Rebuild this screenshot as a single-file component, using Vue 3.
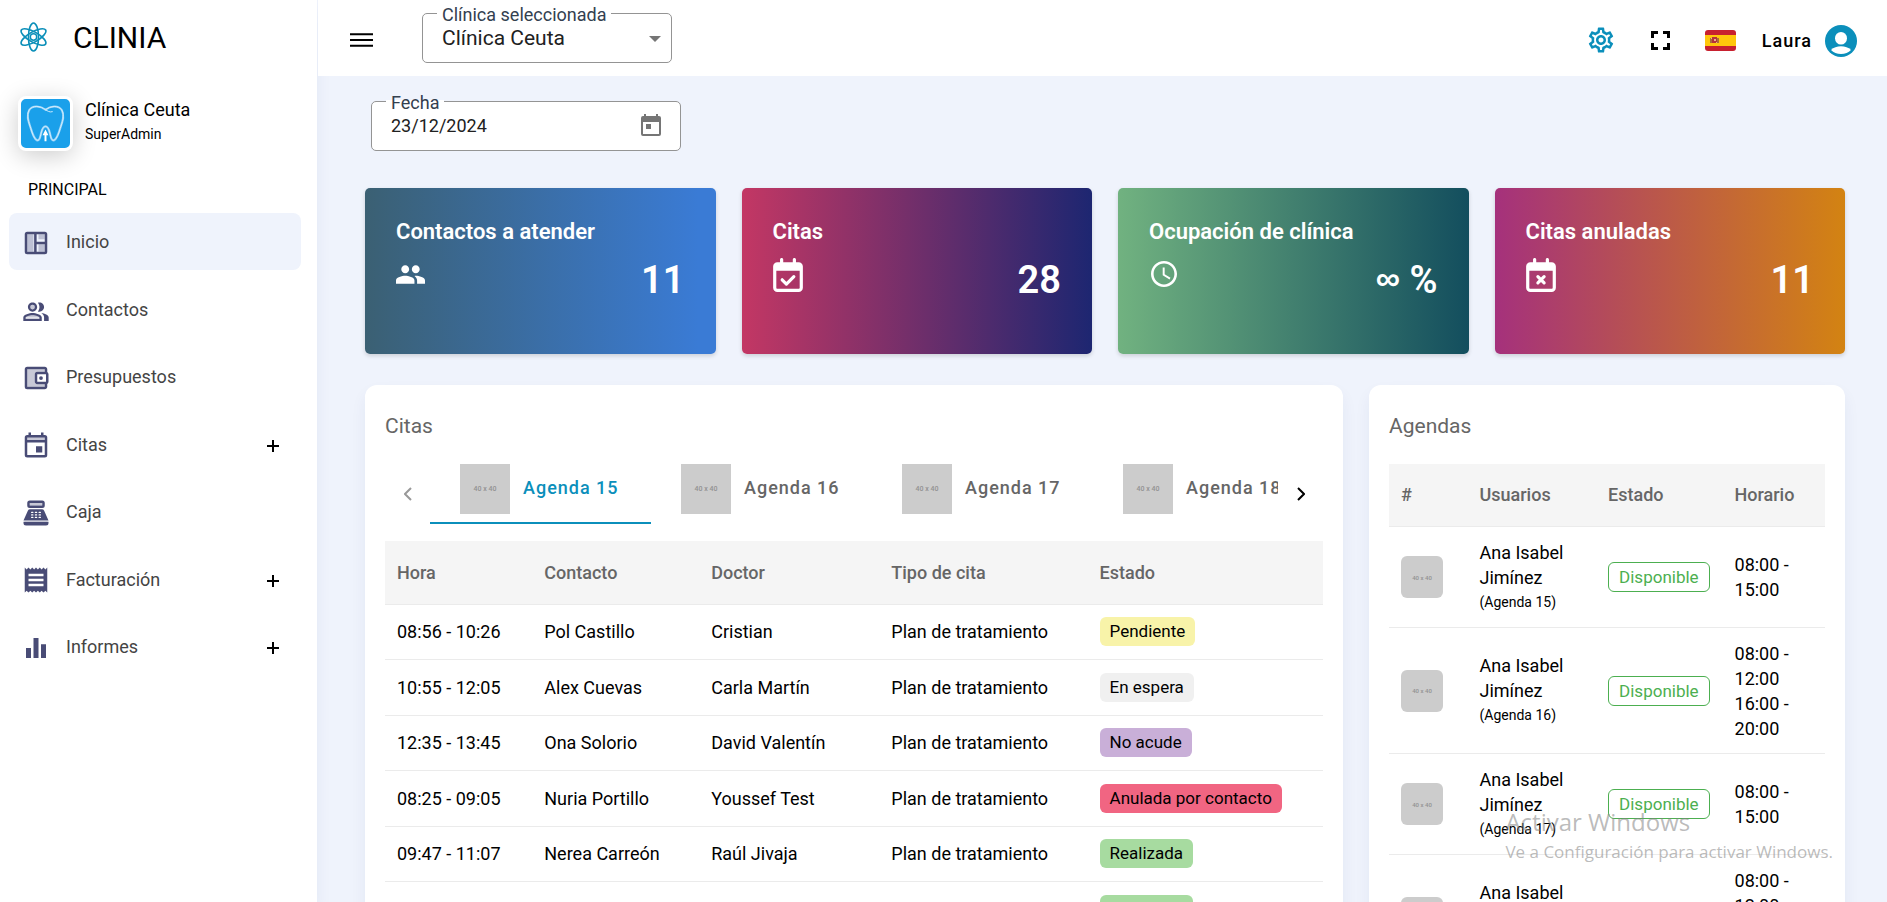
<script setup>
import { ref } from 'vue'

const clinic = ref('Clínica Ceuta')
const date = ref('23/12/2024')
const activeTab = ref(0)

const nav = [
  {
    label: 'Inicio',
    icon: [
      { d: 'M5 5h5v14H5zM14 5h5v4h-5zM14 13h5v6h-5z', o: 0.3 },
      { d: 'M19 3H5a2 2 0 0 0-2 2v14a2 2 0 0 0 2 2h14a2 2 0 0 0 2-2V5a2 2 0 0 0-2-2zM5 19V5h5.5v14zm14 0h-6.500v-6H19zm0-8h-6.500V5H19z' }
    ]
  },
  {
    label: 'Contactos',
    box: '-1 -2.500 26 26',
    icon: [
      { d: 'M9 15c-2.700 0-5.800 1.290-6 2.010V17h12c-.2-.71-3.300-2-6-2zM11 8a2 2 0 1 1-4 0 2 2 0 0 1 4 0z', o: 0.3 },
      { d: 'M16.670 13.130C18.040 14.060 19 15.320 19 17v3h4v-3c0-2.180-3.570-3.470-6.330-3.870zM15 12c2.210 0 4-1.790 4-4s-1.790-4-4-4c-.47 0-.91.1-1.330.24C14.500 5.270 15 6.580 15 8s-.5 2.730-1.330 3.760c.42.14.86.24 1.330.24zM9 12c2.210 0 4-1.790 4-4s-1.790-4-4-4-4 1.790-4 4 1.790 4 4 4zm0-6a2 2 0 1 1 0 4 2 2 0 0 1 0-4zM9 13c-2.670 0-8 1.340-8 4v3h16v-3c0-2.660-5.330-4-8-4zm6 5H3v-.99C3.200 16.290 6.300 15 9 15s5.800 1.290 6 2z' }
    ]
  },
  {
    label: 'Presupuestos',
    icon: [
      { d: 'M5 5v14h14v-2h-6a2 2 0 0 1-2-2V9c0-1.100.9-2 2-2h6V5z', o: 0.3 },
      { d: 'M21 7.280V5c0-1.100-.9-2-2-2H5a2 2 0 0 0-2 2v14a2 2 0 0 0 2 2h14c1.100 0 2-.9 2-2v-2.280A2 2 0 0 0 22 15V9a2 2 0 0 0-1-1.720zM20 9v6h-7V9zM5 19V5h14v2h-6a2 2 0 0 0-2 2v6c0 1.100.9 2 2 2h6v2zM17.500 12a1.500 1.500 0 1 1-3 0 1.500 1.500 0 0 1 3 0z' }
    ]
  },
  {
    label: 'Citas',
    more: true,
    icon: [
      { d: 'M5 5.500h14V8H5z', o: 0.3 },
      { d: 'M19 4h-1V2h-2v2H8V2H6v2H5a2 2 0 0 0-2 2v14a2 2 0 0 0 2 2h14a2 2 0 0 0 2-2V6a2 2 0 0 0-2-2zm0 16H5V10h14zm0-12H5V6h14zM12 13h5v5h-5z' }
    ]
  },
  {
    label: 'Caja',
    icon: [
      { d: 'M7 4h10v2H7zM3 19h18v1H3z', o: 0.3 },
      { d: 'M17 2H7a2 2 0 0 0-2 2v2a2 2 0 0 0 2 2h10a2 2 0 0 0 2-2V4a2 2 0 0 0-2-2zm0 4H7V4h10zM20 22H4a2 2 0 0 1-2-2v-1h20v1a2 2 0 0 1-2 2zM18.530 10.190A2 2 0 0 0 16.700 9H7.300a2 2 0 0 0-1.830 1.190L2 18h20zM9.500 16h-1a.5.5 0 0 1 0-1h1a.5.5 0 0 1 0 1zm0-2h-1a.5.5 0 0 1 0-1h1a.5.5 0 0 1 0 1zm0-2h-1a.5.5 0 0 1 0-1h1a.5.5 0 0 1 0 1zm3 4h-1a.5.5 0 0 1 0-1h1a.5.5 0 0 1 0 1zm0-2h-1a.5.5 0 0 1 0-1h1a.5.5 0 0 1 0 1zm0-2h-1a.5.5 0 0 1 0-1h1a.5.5 0 0 1 0 1zm3 4h-1a.5.5 0 0 1 0-1h1a.5.5 0 0 1 0 1zm0-2h-1a.5.5 0 0 1 0-1h1a.5.5 0 0 1 0 1zm0-2h-1a.5.5 0 0 1 0-1h1a.5.5 0 0 1 0 1z' }
    ]
  },
  {
    label: 'Facturación',
    more: true,
    icon: [
      { d: 'M19.500 3.500 18 2l-1.500 1.500L15 2l-1.500 1.500L12 2l-1.500 1.500L9 2 7.500 3.500 6 2 4.500 3.500 3 2v20l1.500-1.500L6 22l1.500-1.500L9 22l1.500-1.500L12 22l1.500-1.500L15 22l1.500-1.500L18 22l1.500-1.500L21 22V2zM18 17H6v-2h12zm0-4H6v-2h12zm0-4H6V7h12z' }
    ]
  },
  {
    label: 'Informes',
    more: true,
    icon: [{ d: 'M4 12h4v8H4zM10 4h4v16h-4zM16 9h4v11h-4z' }]
  }
]

const stats = [
  { title: 'Contactos a atender', value: '11', tone: 'blue', icon: 'people' },
  { title: 'Citas', value: '28', tone: 'wine', icon: 'check' },
  { title: 'Ocupación de clínica', value: '%', infinite: true, tone: 'green', icon: 'clock' },
  { title: 'Citas anuladas', value: '11', tone: 'orange', icon: 'cross' }
]

const tabs = ['Agenda 15', 'Agenda 16', 'Agenda 17', 'Agenda 18']

const appointments = [
  { time: '08:56 - 10:26', contact: 'Pol Castillo', doctor: 'Cristian', state: 'Pendiente', tone: 'pending' },
  { time: '10:55 - 12:05', contact: 'Alex Cuevas', doctor: 'Carla Martín', state: 'En espera', tone: 'waiting' },
  { time: '12:35 - 13:45', contact: 'Ona Solorio', doctor: 'David Valentín', state: 'No acude', tone: 'absent' },
  { time: '08:25 - 09:05', contact: 'Nuria Portillo', doctor: 'Youssef Test', state: 'Anulada por contacto', tone: 'cancelled' },
  { time: '09:47 - 11:07', contact: 'Nerea Carreón', doctor: 'Raúl Jivaja', state: 'Realizada', tone: 'done' },
  { time: '11:20 - 12:00', contact: 'Guillem Abad', doctor: 'Cristian', state: 'Realizada', tone: 'done' }
]

const agendas = [
  { agenda: 'Agenda 15', hours: ['08:00 - 15:00'] },
  { agenda: 'Agenda 16', hours: ['08:00 - 12:00', '16:00 - 20:00'] },
  { agenda: 'Agenda 17', hours: ['08:00 - 15:00'] },
  { agenda: 'Agenda 18', hours: ['08:00 - 12:00', '16:00 - 20:00'] }
]
</script>

<template>
  <div class="shell">
    <aside class="sidebar">
      <a class="brand" href="#">
        <svg class="atom" viewBox="0 0 32 32" aria-hidden="true">
          <g fill="none" stroke="#0b8fb9" stroke-width="1.700">
            <ellipse cx="16" cy="16" rx="5.200" ry="14.500" />
            <ellipse cx="16" cy="16" rx="5.200" ry="14.500" transform="rotate(60 16 16)" />
            <ellipse cx="16" cy="16" rx="5.200" ry="14.500" transform="rotate(-60 16 16)" />
            <circle cx="16" cy="16" r="3.300" stroke-width="1.500" />
          </g>
        </svg>
        <span>CLINIA</span>
      </a>

      <div class="profile">
        <div class="clinic-logo">
          <svg viewBox="0 0 50 50" aria-hidden="true">
            <g fill="none" stroke-linecap="round" stroke-linejoin="round">
              <path stroke="#8fd0f7" stroke-width="2.200" d="M25 11C20 7 12 6 8.500 11 5 17 8 24 10 30c1.500 5 3 10 6 12 3 1 3.500-3 4.500-7 1-4 2-7 4.500-7s3.500 3 4.500 7 1.500 8 4.500 7c3-2 4.500-7 6-12 2-6 5-13 1.500-19C38 6 30 7 25 11z" />
              <path stroke="#d3edfd" stroke-width="1" d="M32 13c-3 1-5-1-7-2C20 7 12 6 8.500 11 5 17 8 24 10 30c1.500 5 3 10 6 12 3 1 3.500-3 4.500-7 1-4 2-7 4.500-7s3.500 3 4.500 7 1.500 8 4.500 7c3-2 4.500-7 6-12 2-6 5-13 1.500-19C38 6 30 7 25 11" />
            </g>
            <path fill="#fff" d="M25 31l3 6h-2v6h-2v-6h-2z" />
          </svg>
        </div>
        <div class="clinic-info">
          <div class="clinic-name">Clínica Ceuta</div>
          <div class="clinic-role">SuperAdmin</div>
        </div>
      </div>

      <div class="section">PRINCIPAL</div>
      <nav class="nav">
        <a v-for="(item, i) in nav" :key="item.label" href="#" class="nav-item" :class="{ active: i === 0 }">
          <svg class="nav-icon" :viewBox="item.box || '0 0 24 24'" aria-hidden="true">
            <path v-for="(p, k) in item.icon" :key="k" :d="p.d" :opacity="p.o || 1" fill-rule="evenodd" />
          </svg>
          <span>{{ item.label }}</span>
          <svg v-if="item.more" class="plus" viewBox="0 0 12 12" aria-hidden="true">
            <path d="M6 0v12M0 6h12" />
          </svg>
        </a>
      </nav>
    </aside>

    <div class="page">
      <header class="topbar">
        <button class="icon-btn menu" type="button" aria-label="Menú">
          <svg viewBox="0 0 24 16"><path d="M0 1h24v2H0zM0 7h24v2H0zM0 13h24v2H0z" /></svg>
        </button>

        <div class="field clinic-field">
          <label for="clinic">Clínica seleccionada</label>
          <select id="clinic" v-model="clinic">
            <option>Clínica Ceuta</option>
          </select>
          <svg class="caret" viewBox="0 0 12 6" aria-hidden="true"><path d="M0 0h12L6 6z" /></svg>
        </div>

        <div class="tools">
          <button class="icon-btn gear" type="button" aria-label="Ajustes">
            <svg viewBox="0 0 24 24"><path d="M19.430 12.980c.04-.32.07-.64.07-.98 0-.34-.03-.66-.07-.98l2.110-1.650c.19-.15.24-.42.12-.64l-2-3.460c-.09-.16-.26-.25-.44-.25-.06 0-.12.01-.17.03l-2.490 1c-.52-.4-1.080-.73-1.690-.98l-.38-2.650C14.460 2.180 14.250 2 14 2h-4c-.25 0-.46.18-.49.42l-.38 2.650c-.61.25-1.170.59-1.690.98l-2.490-1c-.06-.02-.12-.03-.18-.03-.17 0-.34.09-.43.25l-2 3.460c-.13.22-.07.49.12.64l2.110 1.650c-.04.32-.07.65-.07.98 0 .33.03.66.07.98l-2.110 1.650c-.19.15-.24.42-.12.64l2 3.460c.09.16.26.25.44.25.06 0 .12-.01.17-.03l2.490-1c.52.4 1.080.73 1.690.98l.38 2.650c.03.24.24.42.49.42h4c.25 0 .46-.18.49-.42l.38-2.650c.61-.25 1.170-.59 1.690-.98l2.490 1c.06.02.12.03.18.03.17 0 .34-.09.43-.25l2-3.460c.12-.22.07-.49-.12-.64l-2.110-1.650zm-1.980-1.710c.04.31.05.52.05.73 0 .21-.02.43-.05.73l-.14 1.130.89.7 1.080.84-.7 1.210-1.270-.51-1.040-.42-.9.68c-.43.32-.84.56-1.250.73l-1.060.43-.16 1.130-.2 1.350h-1.400l-.19-1.350-.16-1.130-1.060-.43c-.43-.18-.83-.41-1.230-.71l-.91-.7-1.060.43-1.270.51-.7-1.210 1.080-.84.89-.7-.14-1.130c-.03-.31-.05-.54-.05-.74s.02-.43.05-.73l.14-1.130-.89-.7-1.080-.84.7-1.210 1.270.51 1.040.42.9-.68c.43-.32.84-.56 1.250-.73l1.060-.43.16-1.130.2-1.350h1.390l.19 1.350.16 1.130 1.060.43c.43.18.83.41 1.230.71l.91.7 1.060-.43 1.270-.51.7 1.210-1.070.85-.89.7.14 1.130zM12 8c-2.210 0-4 1.790-4 4s1.790 4 4 4 4-1.790 4-4-1.790-4-4-4zm0 6c-1.100 0-2-.9-2-2s.9-2 2-2 2 .9 2 2-.9 2-2 2z" /></svg>
          </button>
          <button class="icon-btn full" type="button" aria-label="Pantalla completa">
            <svg viewBox="0 0 19 19"><path d="M0 0h7v3H3v4H0zM12 0h7v7h-3V3h-4zM0 12h3v4h4v3H0zM16 12h3v7h-7v-3h4z" /></svg>
          </button>
          <button class="icon-btn flag" type="button" aria-label="Español">
            <svg viewBox="0 0 31 21">
              <path fill="#c8202f" d="M0 0h31v21H0z" />
              <path fill="#ffc60b" d="M0 5h31v11H0z" />
              <path fill="#ad6b3a" d="M5 8h2v5H5zM12 8h2v5h-2z" />
              <path fill="#b5323a" d="M7 7h5v6H7z" />
              <path fill="#e8b48a" d="M9 9h2v2H9zM6 8h1v1H6zM11 12h1v1h-1z" />
            </svg>
          </button>
          <button class="user" type="button">
            <span>Laura</span>
            <svg viewBox="0 0 32 32" aria-hidden="true">
              <circle cx="16" cy="16" r="16" fill="#0b8fbb" />
              <ellipse cx="16" cy="13.200" rx="6" ry="6.300" fill="#fff" />
              <path fill="#fff" d="M6 25c2.500-2.600 6-3.800 10-3.800s7.500 1.200 10 3.800c-2.500 2.600-6 3.900-10 3.900S8.500 27.600 6 25z" />
            </svg>
          </button>
        </div>
      </header>

      <main class="content">
        <div class="field date-field">
          <label for="date">Fecha</label>
          <input id="date" v-model="date" type="text" />
          <button class="icon-btn calendar" type="button" aria-label="Abrir calendario">
            <svg viewBox="0 0 20 22"><path fill-rule="evenodd" d="M3 0h2v2h10V0h2v2h1a2 2 0 0 1 2 2v16a2 2 0 0 1-2 2H2a2 2 0 0 1-2-2V4a2 2 0 0 1 2-2h1zM2 8v12h16V8zM5 10h5v5H5z" /></svg>
          </button>
        </div>

        <section class="stats">
          <article v-for="s in stats" :key="s.title" class="stat" :class="s.tone">
            <h2>{{ s.title }}</h2>
            <div class="stat-row">
              <svg v-if="s.icon === 'people'" class="ic-people" viewBox="1 5 22 14" aria-hidden="true">
                <path d="M16 11c1.660 0 2.990-1.340 2.990-3S17.660 5 16 5s-3 1.340-3 3 1.340 3 3 3zm-8 0c1.660 0 2.990-1.340 2.990-3S9.660 5 8 5 5 6.340 5 8s1.340 3 3 3zm0 2c-2.330 0-7 1.170-7 3.500V19h14v-2.500c0-2.330-4.670-3.500-7-3.500zm8 0c-.29 0-.62.02-.97.05 1.160.84 1.970 1.970 1.970 3.450V19h6v-2.500c0-2.330-4.670-3.500-7-3.500z" />
              </svg>
              <svg v-else-if="s.icon === 'clock'" class="ic-clock" viewBox="2 2 20 20" aria-hidden="true">
                <path d="M11.990 2C6.470 2 2 6.480 2 12s4.470 10 9.990 10C17.520 22 22 17.520 22 12S17.520 2 11.990 2zM12 20c-4.420 0-8-3.580-8-8s3.580-8 8-8 8 3.580 8 8-3.580 8-8 8zm.5-13H11v6l5.250 3.150.75-1.230-4.500-2.670z" />
              </svg>
              <svg v-else class="ic-cal" viewBox="0 0 448 512" aria-hidden="true">
                <path d="M128 0c13.300 0 24 10.700 24 24v40h144V24c0-13.300 10.700-24 24-24s24 10.700 24 24v40h40c35.300 0 64 28.700 64 64v320c0 35.300-28.700 64-64 64H64c-35.300 0-64-28.700-64-64V128c0-35.300 28.700-64 64-64h40V24c0-13.300 10.700-24 24-24zm272 192H48v256c0 8.800 7.200 16 16 16h320c8.800 0 16-7.200 16-16z" />
                <path class="mark" :d="s.icon === 'check' ? 'M136 328l64 64 112-112' : 'M177 281l94 94M271 281l-94 94'" />
              </svg>
              <strong><span v-if="s.infinite" class="infinite">∞ </span>{{ s.value }}</strong>
            </div>
          </article>
        </section>

        <div class="panels">
          <section class="panel panel-main">
            <h3>Citas</h3>
            <div class="tabs">
              <button class="arrow prev" type="button" aria-label="Anterior" disabled>
                <svg viewBox="0 0 8 14"><path d="M7 1L1 7l6 6" /></svg>
              </button>
              <div class="tab-list" role="tablist">
                <button
                  v-for="(t, i) in tabs"
                  :key="t"
                  type="button"
                  role="tab"
                  class="tab"
                  :class="{ selected: i === activeTab }"
                  :aria-selected="i === activeTab"
                  @click="activeTab = i"
                >
                  <span class="thumb">40 x 40</span>
                  <span class="tab-text">{{ t }}</span>
                </button>
              </div>
              <button class="arrow" type="button" aria-label="Siguiente">
                <svg viewBox="0 0 8 14"><path d="M1 1l6 6-6 6" /></svg>
              </button>
            </div>

            <table class="appointments">
              <colgroup>
                <col class="c-time" /><col class="c-contact" /><col class="c-doctor" /><col class="c-type" /><col />
              </colgroup>
              <thead>
                <tr><th>Hora</th><th>Contacto</th><th>Doctor</th><th>Tipo de cita</th><th>Estado</th></tr>
              </thead>
              <tbody>
                <tr v-for="a in appointments" :key="a.time">
                  <td>{{ a.time }}</td>
                  <td>{{ a.contact }}</td>
                  <td>{{ a.doctor }}</td>
                  <td>Plan de tratamiento</td>
                  <td><span class="badge" :class="a.tone">{{ a.state }}</span></td>
                </tr>
              </tbody>
            </table>
          </section>

          <section class="panel panel-side">
            <h3>Agendas</h3>
            <table class="agendas">
              <colgroup>
                <col class="c-num" /><col class="c-user" /><col class="c-state" /><col />
              </colgroup>
              <thead>
                <tr><th>#</th><th>Usuarios</th><th>Estado</th><th>Horario</th></tr>
              </thead>
              <tbody>
                <tr v-for="g in agendas" :key="g.agenda">
                  <td><span class="thumb small">40 x 40</span></td>
                  <td>Ana Isabel Jimínez <small>({{ g.agenda }})</small></td>
                  <td><span class="badge outline">Disponible</span></td>
                  <td class="hours"><div v-for="h in g.hours" :key="h">{{ h }}</div></td>
                </tr>
              </tbody>
            </table>
          </section>
        </div>
      </main>
    </div>

    <div class="watermark">
      <div class="wm-title">Activar Windows</div>
      <div class="wm-text">Ve a Configuración para activar Windows.</div>
    </div>
  </div>
</template>

<style>
body {
  margin: 0;
  background: #eff3fc;
}
</style>

<style scoped>
* {
  box-sizing: border-box;
}
.shell {
  display: flex;
  height: 100vh;
  overflow: hidden;
  position: relative;
  font-family: Roboto, "Liberation Sans", sans-serif;
  font-size: 18px;
  color: #000;
}
button,
input,
select {
  font: inherit;
  color: inherit;
  border: 0;
  padding: 0;
  background: none;
}
a {
  color: inherit;
  text-decoration: none;
}
svg {
  display: block;
}

/* Sidebar */
.sidebar {
  flex: 0 0 317px;
  background: #fff;
  box-shadow: 0 8px 16px rgba(40, 50, 120, 0.06);
  overflow: hidden;
}
.brand {
  display: flex;
  align-items: center;
  height: 76px;
  padding: 0 18px 2px;
  gap: 24px;
  font-size: 30px;
}
.atom {
  width: 31px;
  height: 32px;
}
.profile {
  display: flex;
  align-items: flex-start;
  gap: 12px;
  padding: 20px 18px 0;
}
.clinic-logo {
  width: 55px;
  height: 55px;
  border: 3px solid #fff;
  border-radius: 8px;
  background: #1aa0ea;
  overflow: hidden;
  box-shadow: 0 5px 25px rgba(0, 0, 0, 0.2);
}
.clinic-name {
  line-height: 28px;
}
.clinic-role {
  font-size: 14px;
  line-height: 20px;
}
.section {
  padding: 28px 28px 0;
  font-size: 16px;
  line-height: 22px;
}
.nav {
  display: flex;
  flex-direction: column;
  justify-content: space-between;
  min-height: 462px;
  margin-top: 12px;
  padding: 0 16px 0 9px;
}
.nav-item {
  display: flex;
  align-items: center;
  height: 57px;
  padding: 0 22px 0 12px;
  border-radius: 8px;
  color: #444;
}
.nav-item.active {
  background: #eff3fc;
}
.nav-icon {
  width: 30px;
  height: 30px;
  margin-top: 2px;
  margin-right: 15px;
  fill: #494c76;
}
.plus {
  width: 12px;
  height: 12px;
  margin-left: auto;
  margin-top: 3px;
  stroke: #000;
  stroke-width: 2;
}

/* Top bar */
.page {
  flex: 1;
  min-width: 0;
  display: flex;
  flex-direction: column;
}
.topbar {
  display: flex;
  align-items: center;
  flex: none;
  height: 76px;
  margin-left: 1px;
  padding: 0 30px 0 32px;
  background: #fff;
}
.icon-btn {
  display: flex;
  cursor: pointer;
}
.menu {
  margin-right: 49px;
  margin-top: 3px;
}
.menu svg {
  width: 23px;
  height: 16px;
}
.field {
  position: relative;
  display: flex;
  align-items: center;
  height: 50px;
  padding: 0 19px;
  border: 1px solid #949494;
  border-radius: 5px;
  background: #fff;
}
.field label {
  position: absolute;
  left: 14px;
  top: -9px;
  padding: 0 5px;
  font-size: 18px;
  line-height: 20px;
  color: #33404f;
  white-space: nowrap;
  background: linear-gradient(#fff, #fff) 0 7px / 100% 3px no-repeat;
}
.clinic-field {
  width: 250px;
}
.clinic-field select {
  flex: 1;
  appearance: none;
  font-size: 21px;
  color: #212121;
}
.caret {
  position: absolute;
  right: 10px;
  top: 22px;
  width: 12px;
  height: 6px;
  fill: #757575;
  pointer-events: none;
}
.tools {
  display: flex;
  align-items: center;
  margin-left: auto;
  padding-top: 4px;
}
.gear svg {
  width: 30px;
  height: 30px;
  fill: #0b8fbb;
}
.full {
  margin: 0 35px;
}
.full svg {
  width: 19px;
  height: 19px;
}
.flag svg {
  width: 31px;
  height: 21px;
  border-radius: 3px;
}
.user {
  display: flex;
  align-items: center;
  gap: 13px;
  margin-left: 26px;
  font-weight: 500;
  letter-spacing: 1px;
}
.user svg {
  width: 32px;
  height: 32px;
  margin-top: 2px;
}

/* Content */
.content {
  flex: 1;
  min-height: 0;
  overflow-y: auto;
  scrollbar-width: none;
  padding: 25px 42px 0 48px;
}
.date-field {
  width: 310px;
  margin-left: 6px;
  padding-bottom: 2px;
}
.date-field input {
  flex: 1;
  min-width: 0;
  outline: 0;
  color: #212121;
}
.calendar svg {
  width: 20px;
  height: 22px;
  fill: #757575;
}
.stats {
  display: grid;
  grid-template-columns: repeat(4, 1fr);
  gap: 26px;
  margin-top: 37px;
}
.stat {
  height: 166px;
  padding: 29px 31px;
  border-radius: 5px;
  color: #fff;
  box-shadow: 0 2px 4px rgba(0, 0, 0, 0.15);
}
.stat h2 {
  margin: 0;
  font-size: 22px;
  font-weight: 600;
  line-height: 30px;
}
.blue {
  background: linear-gradient(to right, #3b6073, #3a7bd5 95%);
}
.wine {
  background: linear-gradient(to right, #c33764, #1d2671);
}
.green {
  background: linear-gradient(to right, #71b280, #134e5e);
}
.orange {
  background: linear-gradient(to right, #a5317c, #d38312);
}
.stat-row {
  display: flex;
  align-items: flex-start;
  justify-content: space-between;
  margin-top: 11px;
}
.stat-row svg {
  fill: #fff;
}
.stat-row strong {
  font-size: 38px;
  font-weight: 600;
  line-height: 44px;
}
.infinite {
  font-family: "Liberation Sans", sans-serif;
  font-size: 34px;
  font-weight: 700;
  line-height: 1;
  vertical-align: 10%;
}
.ic-people {
  width: 29px;
  height: 19px;
  margin-top: 7px;
}
.ic-clock {
  width: 26px;
  height: 26px;
  margin: 3px 2px;
}
.ic-cal {
  width: 30px;
  height: 34px;
}
.mark {
  fill: none;
  stroke: #fff;
  stroke-width: 48;
  stroke-linecap: round;
  stroke-linejoin: round;
}
.panels {
  display: grid;
  grid-template-columns: repeat(12, 1fr);
  column-gap: 26px;
  margin-top: 31px;
  align-items: start;
}
.panel {
  padding: 21px 20px 24px;
  border-radius: 12px;
  background: #fff;
  box-shadow: 0 8px 16px rgba(40, 50, 120, 0.06);
  min-width: 0;
}
.panel-main {
  grid-column: span 8;
}
.panel-side {
  grid-column: span 4;
}
.panel h3 {
  margin: 0 0 18px;
  font-size: 21px;
  font-weight: 400;
  line-height: 40px;
  color: #666;
}
.tabs {
  display: flex;
  height: 60px;
}
.arrow {
  flex: 0 0 45px;
  display: flex;
  align-items: center;
  justify-content: center;
  cursor: pointer;
}
.arrow svg {
  width: 8px;
  height: 14px;
  fill: none;
  stroke: #000;
  stroke-width: 2;
}
.arrow.prev svg {
  stroke: #999;
}
.tab-list {
  flex: 1;
  min-width: 0;
  display: flex;
  overflow: hidden;
}
.tab {
  flex: 0 0 221px;
  display: flex;
  gap: 13px;
  padding-left: 30px;
  height: 60px;
  color: #666;
  font-weight: 500;
  letter-spacing: 1px;
  white-space: nowrap;
  cursor: pointer;
}
.tab.selected {
  color: #0b8fbb;
  border-bottom: 2px solid #0b8fbb;
}
.tab-text {
  line-height: 48px;
}
.thumb {
  flex: none;
  display: flex;
  align-items: center;
  justify-content: center;
  width: 50px;
  height: 50px;
  background: #ccc;
  color: #929292;
  font-size: 7px;
  font-weight: 500;
  letter-spacing: 0;
  white-space: nowrap;
}
.thumb.small {
  width: 42px;
  height: 42px;
  border-radius: 6px;
  font-size: 6px;
}
table {
  width: 100%;
  table-layout: fixed;
  border-collapse: collapse;
}
th {
  height: 63px;
  padding: 0 12px;
  background: #f5f5f5;
  border-bottom: 1px solid #ebebeb;
  color: #666;
  font-weight: 500;
  text-align: left;
}
td {
  padding: 0 12px;
  border-bottom: 1px solid #ebebeb;
}
.appointments {
  margin-top: 17px;
}
.appointments td {
  height: 55px;
  white-space: nowrap;
}
.appointments tr:nth-child(even) td {
  height: 56px;
}
.c-time {
  width: 15.7%;
}
.c-contact {
  width: 17.8%;
}
.c-doctor {
  width: 19.2%;
}
.c-type {
  width: 22.2%;
}
.badge {
  display: inline-block;
  padding: 0 10px;
  border-radius: 6px;
  font-size: 17px;
  line-height: 29px;
  vertical-align: middle;
}
.pending {
  background: #f8f3a9;
}
.waiting {
  background: #f0f0f0;
}
.absent {
  background: #c9afd8;
}
.cancelled {
  background: #f16582;
}
.done {
  background: #a7dba0;
}
.outline {
  border: 1px solid #4caf50;
  line-height: 28px;
  color: #4caf50;
}
.agendas th {
  height: 62px;
}
.agendas td {
  padding: 13px 12px 12px;
  line-height: 25px;
}
.agendas small {
  display: block;
  font-size: 14px;
}
.c-num {
  width: 18%;
}
.c-user {
  width: 29.5%;
}
.c-state {
  width: 29%;
}
.agendas .hours {
  padding-right: 30px;
}

/* System notice laid over the page */
.watermark {
  position: absolute;
  right: 54px;
  bottom: 37px;
  font-family: "Open Sans", sans-serif;
  color: rgba(130, 130, 130, 0.55);
  pointer-events: none;
  white-space: nowrap;
}
.wm-title {
  font-size: 24px;
  line-height: 34px;
}
.wm-text {
  font-size: 17px;
  line-height: 26px;
}
</style>
